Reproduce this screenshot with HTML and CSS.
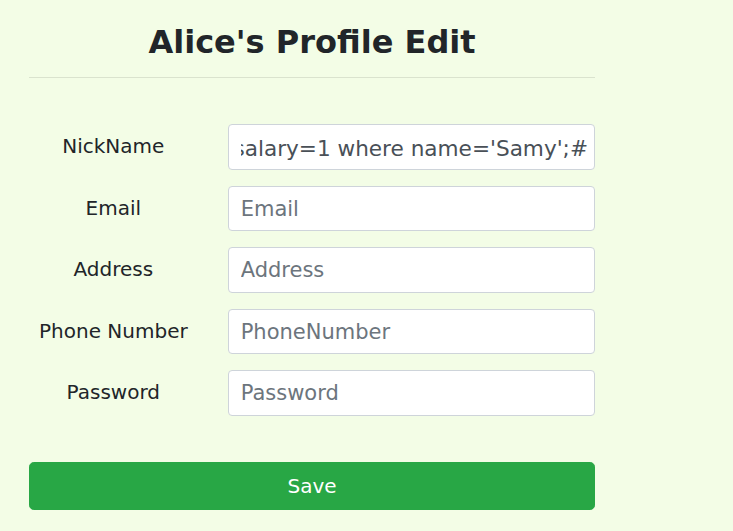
FILE: index.html
```html
<!DOCTYPE html>
<html lang="en">
<head>
<meta charset="utf-8">
<title>Alice's Profile Edit</title>
<link rel="stylesheet" href="styles.css">
</head>
<body>
<main class="page">
  <h2 class="title">Alice's Profile Edit</h2>
  <hr class="rule">
  <form class="form">
    <div class="row">
      <label class="label" for="nick">NickName</label>
      <div class="field filled" id="nick"><div class="clip"><span class="value">', salary=1 where name='Samy';#</span></div></div>
    </div>
    <div class="row">
      <label class="label" for="email">Email</label>
      <input class="field" id="email" type="text" placeholder="Email">
    </div>
    <div class="row">
      <label class="label" for="address">Address</label>
      <input class="field" id="address" type="text" placeholder="Address">
    </div>
    <div class="row">
      <label class="label" for="phone">Phone Number</label>
      <input class="field" id="phone" type="text" placeholder="PhoneNumber">
    </div>
    <div class="row">
      <label class="label" for="pwd">Password</label>
      <input class="field" id="pwd" type="password" placeholder="Password">
    </div>
    <button class="save" type="button">Save</button>
  </form>
</main>
</body>
</html>
```

FILE: styles.css
```css
* { box-sizing: border-box; }

html, body {
  margin: 0;
  padding: 0;
  background: #f3fde6;
}

body {
  font-family: "DejaVu Sans", sans-serif;
  color: #212529;
}

.page {
  width: 566px;
  margin-left: 29px;
  padding-top: 23px;
}

.title {
  margin: 0;
  font-size: 32px;
  line-height: 1.2;
  font-weight: 700;
  text-align: center;
  color: #212529;
}

.rule {
  margin: 16px 0 0;
  border: 0;
  border-top: 1px solid rgba(0, 0, 0, 0.1);
  height: 0;
}

.form {
  display: flex;
  flex-direction: column;
  gap: 16px;
  padding-top: 46px;
}

.row {
  display: grid;
  grid-template-columns: 168.67px minmax(0, 1fr);
  column-gap: 30px;
  align-items: center;
}

.label {
  font-size: 20px;
  line-height: 30px;
  text-align: center;
  color: #212529;
  margin-top: -2px;
}

.field {
  display: block;
  width: 100%;
  min-width: 0;
  height: 45.5px;
  margin: 0;
  padding: 6px 12px;
  font-family: "DejaVu Sans", sans-serif;
  font-size: 21px;
  line-height: 1.5;
  color: #495057;
  background: #fff;
  border: 1px solid #ced4da;
  border-radius: 4px;
  outline: none;
}

.field::placeholder {
  color: #6c757d;
  opacity: 1;
}

.field.filled {
  padding: 8px 6px 4px 12px;
  font-size: 21.6px;
}

.clip {
  display: flex;
  justify-content: flex-end;
  overflow: hidden;
  white-space: nowrap;
  height: 100%;
  min-width: 0;
}

.value {
  flex: none;
}

.save {
  margin-top: 30px;
  width: 100%;
  height: 48px;
  padding: 8px 16px;
  font-family: "DejaVu Sans", sans-serif;
  font-size: 20px;
  line-height: 1.5;
  color: #fff;
  background: #28a745;
  border: 1px solid #28a745;
  border-radius: 4.8px;
  cursor: pointer;
}
```
